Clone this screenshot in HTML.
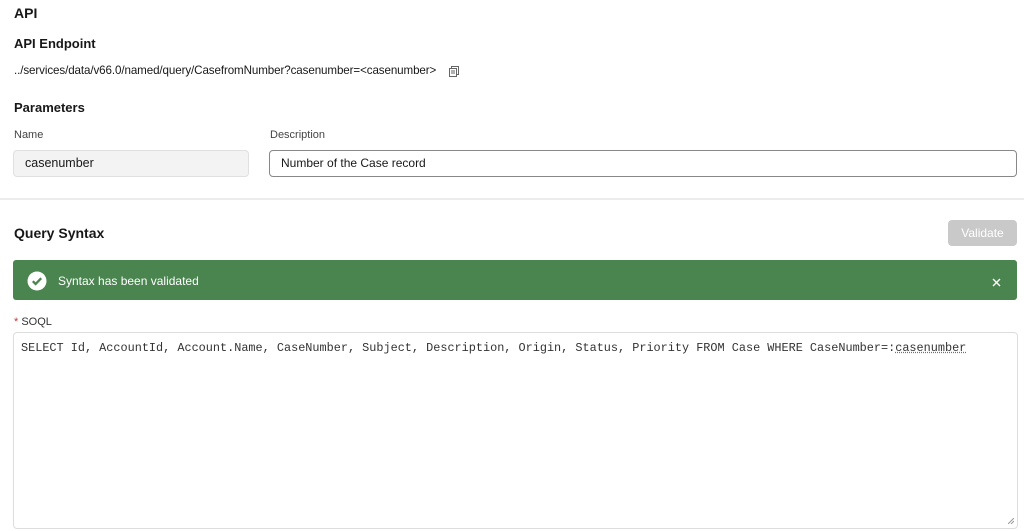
<!DOCTYPE html>
<html><head><style>
body{margin:0;width:1024px;height:531px;background:#fff;font-family:"Liberation Sans",sans-serif;color:#181818;position:relative;overflow:hidden}
.a{position:absolute;white-space:nowrap}
.b{font-weight:bold}
</style></head><body>
<div class="a b" style="left:14px;top:5px;font-size:14px">API</div>
<div class="a b" style="left:14px;top:36px;font-size:13px">API Endpoint</div>
<div class="a" style="left:14px;top:64px;font-size:11.6px;letter-spacing:-0.1px">../services/data/v66.0/named/query/CasefromNumber?casenumber=&lt;casenumber&gt;</div>
<svg class="a" style="left:449px;top:66px" width="10" height="11" viewBox="0 0 10 11"><rect x="2.5" y="0.5" width="7" height="8" fill="none" stroke="#666"/><rect x="0.5" y="2.5" width="7" height="8" fill="#fff" stroke="#666"/><path d="M2 5h4M2 7h4" stroke="#666"/></svg>
<div class="a b" style="left:14px;top:100px;font-size:13px">Parameters</div>
<div class="a" style="left:14px;top:129px;font-size:11px;color:#444">Name</div>
<div class="a" style="left:270px;top:129px;font-size:11px;color:#444">Description</div>
<div class="a" style="left:13px;top:150px;width:234px;height:25px;background:#f3f3f3;border:1px solid #e0e0e0;border-radius:4px"></div>
<div class="a" style="left:25px;top:156px;font-size:12.5px">casenumber</div>
<div class="a" style="left:269px;top:150px;width:746px;height:25px;border:1px solid #888;border-radius:4px"></div>
<div class="a" style="left:281px;top:156px;font-size:12px">Number of the Case record</div>
<div class="a" style="left:0;top:198px;width:1024px;height:2px;background:#ececec"></div>
<div class="a b" style="left:14px;top:225px;font-size:14px">Query Syntax</div>
<div class="a" style="left:948px;top:220px;width:69px;height:26px;background:#c9c9c9;border-radius:4px;color:#fff;font-size:12px;text-align:center;line-height:26px">Validate</div>
<div class="a" style="left:13px;top:260px;width:1004px;height:40px;background:#4a844f;border-radius:3px"></div>
<svg class="a" style="left:27px;top:271px" width="20" height="20" viewBox="0 0 20 20"><circle cx="10" cy="10" r="9.5" fill="#fff"/><path d="M5.8 10.2l2.8 2.8 5.6-5.8" fill="none" stroke="#4a844f" stroke-width="2.3"/></svg>
<div class="a" style="left:58px;top:274px;font-size:12px;color:#fff">Syntax has been validated</div>
<svg class="a" style="left:992px;top:278px" width="9" height="9" viewBox="0 0 9 9"><path d="M1 1l7 7M8 1l-7 7" stroke="#fff" stroke-width="1.4"/></svg>
<div class="a" style="left:14px;top:316px;font-size:11px;color:#333"><span style="color:#c23934">*</span> SOQL</div>
<div class="a" style="left:13px;top:332px;width:1003px;height:195px;border:1px solid #ddd;border-radius:4px"></div>
<div class="a" style="left:21px;top:341px;font-family:'Liberation Mono',monospace;font-size:11.85px;color:#333">SELECT Id, AccountId, Account.Name, CaseNumber, Subject, Description, Origin, Status, Priority FROM Case WHERE CaseNumber=:<span style="text-decoration:underline dotted #e04040">casenumber</span></div>
<svg class="a" style="left:1008px;top:518px" width="6" height="6"><path d="M0 6L6 0M3 6L6 3" stroke="#999"/></svg>
</body></html>
